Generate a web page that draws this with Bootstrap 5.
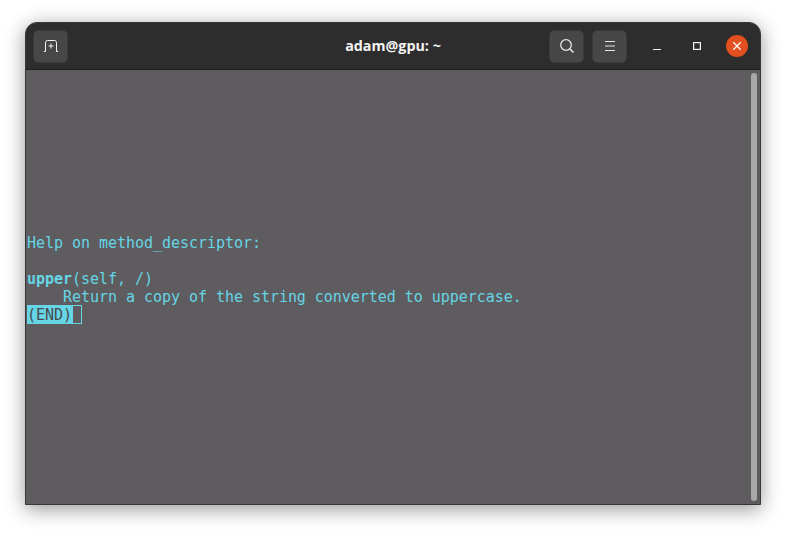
<!DOCTYPE html>
<html lang="en">
<head>
<meta charset="utf-8">
<title>adam@gpu: ~</title>
<link href="https://cdn.jsdelivr.net/npm/bootstrap@5.3.0/dist/css/bootstrap.min.css" rel="stylesheet">
<style>
html,body{height:533px;overflow:hidden;background:#fff}
.term-win{width:736px;height:483px;margin:22px 0 0 25px;border:1px solid #38383a;border-radius:12px 12px 0 0;box-shadow:0 4px 20px rgba(0,0,0,.42);background:#5e5c5f;overflow:hidden}
.term-head{height:47px;background:#2d2d2d;border-bottom:1px solid #1f1f1f;padding:6px 12px 6px 7px;flex:none}
.head-btn{width:35px;height:33px;background:#474747;border:1px solid #3a3a3a;border-radius:5px;color:#eee}
.term-title{left:0;right:0;top:0;bottom:2px;color:#f4f4f4;font:700 14.3px "Open Sans",sans-serif}
.win-ctl{width:22px;height:22px}
.win-close{background:#e2501f;border-radius:50%}
.term-body{position:relative;padding:164px 0 0 1px;font:15px/18px "DejaVu Sans Mono",monospace;letter-spacing:-.035px;color:#66d5e5;flex:1 1 auto;background:#5e5c5f}
.term-line{height:18px;white-space:pre}
.end-mark{background:#66d5e5;color:#4a4a4e;height:19px;margin-top:-1px;padding-top:1px}
.term-cursor{width:10px;height:19px;margin-top:-1px;border:1px solid #66d5e5}
.term-thumb{position:absolute;right:3px;top:3px;bottom:3px;width:6px;background:#a9a8a9;border-radius:3px}
</style>
</head>
<body>
<div class="term-win d-flex flex-column">
  <header class="term-head d-flex align-items-center position-relative">
    <div class="term-title position-absolute d-flex align-items-center justify-content-center">adam@gpu: ~</div>
    <div class="head-btn d-flex align-items-center justify-content-center position-relative">
      <svg width="16" height="12" viewBox="0 0 16 12" fill="none" stroke="#f2f2f2" stroke-width="1"><path d="M.8 11.5H2.5V2.5Q2.5 .5 4.5 .5H11.5Q13.5 .5 13.5 2.5V11.5H15.2M8 3.5V8.5M5.5 6H10.5"/></svg>
    </div>
    <div class="ms-auto d-flex align-items-center position-relative">
      <div class="head-btn d-flex align-items-center justify-content-center me-2">
        <svg width="16" height="16" viewBox="0 0 16 16" fill="none" stroke="#e6e6e6" stroke-width="1.3"><circle cx="7" cy="7" r="5.3"/><path d="M10.8 10.8L14.5 14.5" stroke-width="1.6"/></svg>
      </div>
      <div class="head-btn d-flex align-items-center justify-content-center">
        <svg width="12" height="10" viewBox="0 0 12 10" stroke="#e6e6e6" stroke-width="1"><path d="M1 .5H11M1 5H11M1 9.5H11"/></svg>
      </div>
      <div class="win-ctl d-flex align-items-center justify-content-center" style="margin-left:19px">
        <svg width="10" height="10" viewBox="0 0 10 10" stroke="#f2f2f2" stroke-width="1"><path d="M1 8.5H9"/></svg>
      </div>
      <div class="win-ctl d-flex align-items-center justify-content-center" style="margin-left:18px">
        <svg width="10" height="10" viewBox="0 0 10 10" fill="none" stroke="#f2f2f2" stroke-width="1.2"><rect x="1.6" y="1.6" width="6.8" height="6.8"/></svg>
      </div>
      <div class="win-ctl win-close d-flex align-items-center justify-content-center" style="margin-left:18px">
        <svg width="10" height="10" viewBox="0 0 10 10" stroke="#fff" stroke-width="1.3"><path d="M1.3 1.3L8.7 8.7M8.7 1.3L1.3 8.7"/></svg>
      </div>
    </div>
  </header>
  <main class="term-body">
    <div class="term-line">Help on method_descriptor:</div>
    <div class="term-line"> </div>
    <div class="term-line"><b>upper</b>(self, /)</div>
    <div class="term-line">    Return a copy of the string converted to uppercase.</div>
    <div class="term-line d-flex"><span class="end-mark">(END)</span><span class="term-cursor"></span></div>
    <div class="term-thumb"></div>
  </main>
</div>
<script src="https://cdn.jsdelivr.net/npm/bootstrap@5.3.0/dist/js/bootstrap.bundle.min.js"></script>
</body>
</html>
